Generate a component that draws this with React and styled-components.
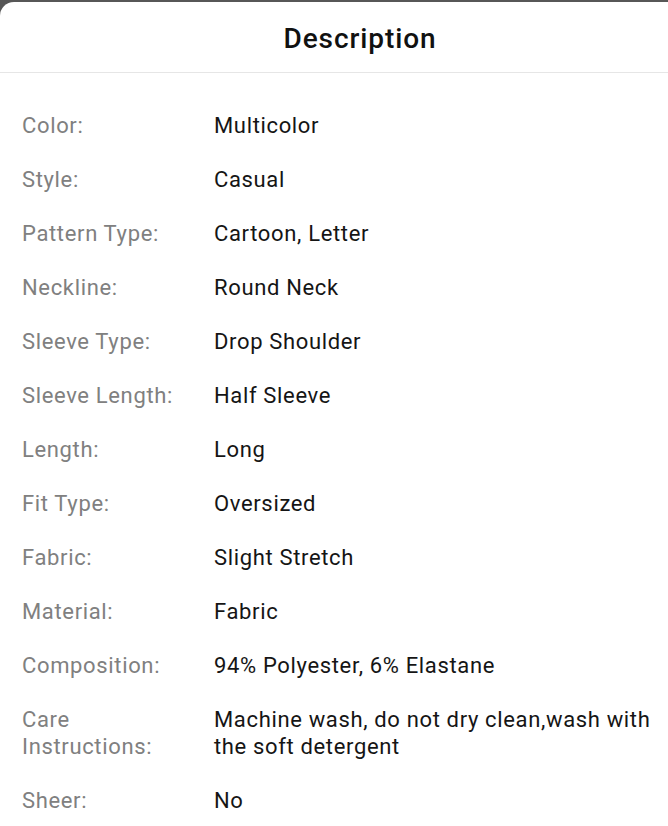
import React from "react";
import styled, { createGlobalStyle } from "styled-components";

const Global = createGlobalStyle`
  html, body { margin: 0; padding: 0; background: #575757; }
  body { font-family: Roboto, "Noto Sans", "Liberation Sans", sans-serif; }
`;

const Sheet = styled.div`
  margin-top: 2px;
  min-height: calc(100vh - 2px);
  background: #fff;
  border-top-left-radius: 14px;
  box-sizing: border-box;
`;

const Header = styled.header`
  height: 71px;
  display: flex;
  align-items: center;
  justify-content: center;
  padding-left: 52px;
  padding-top: 3px;
  box-sizing: border-box;
  border-bottom: 1px solid #e6e6e6;
`;

const Title = styled.h1`
  margin: 0;
  font-size: 28px;
  font-weight: 500;
  color: #111;
  letter-spacing: 0.9px;
`;

const List = styled.dl`
  margin: 0;
  padding: 39px 12px 0 22px;
  display: grid;
  grid-template-columns: 192px 1fr;
  row-gap: 27px;
  font-size: 22px;
  line-height: 27px;
  letter-spacing: 0.65px;
`;

const Label = styled.dt`
  margin: 0;
  color: #808080;
`;

const Value = styled.dd`
  margin: 0;
  color: #151515;
`;

const rows = [
  ["Color:", "Multicolor"],
  ["Style:", "Casual"],
  ["Pattern Type:", "Cartoon, Letter"],
  ["Neckline:", "Round Neck"],
  ["Sleeve Type:", "Drop Shoulder"],
  ["Sleeve Length:", "Half Sleeve"],
  ["Length:", "Long"],
  ["Fit Type:", "Oversized"],
  ["Fabric:", "Slight Stretch"],
  ["Material:", "Fabric"],
  ["Composition:", "94% Polyester, 6% Elastane"],
  ["Care\nInstructions:", "Machine wash, do not dry clean,wash with the soft detergent"],
  ["Sheer:", "No"],
];

export default function App() {
  return (
    <>
      <Global />
      <Sheet>
        <Header>
          <Title>Description</Title>
        </Header>
        <List>
          {rows.map(([l, v]) => (
            <React.Fragment key={l}>
              <Label>
                {l.split("\n").map((p, i) => (
                  <React.Fragment key={i}>
                    {i > 0 && <br />}
                    {p}
                  </React.Fragment>
                ))}
              </Label>
              <Value>{v}</Value>
            </React.Fragment>
          ))}
        </List>
      </Sheet>
    </>
  );
}
